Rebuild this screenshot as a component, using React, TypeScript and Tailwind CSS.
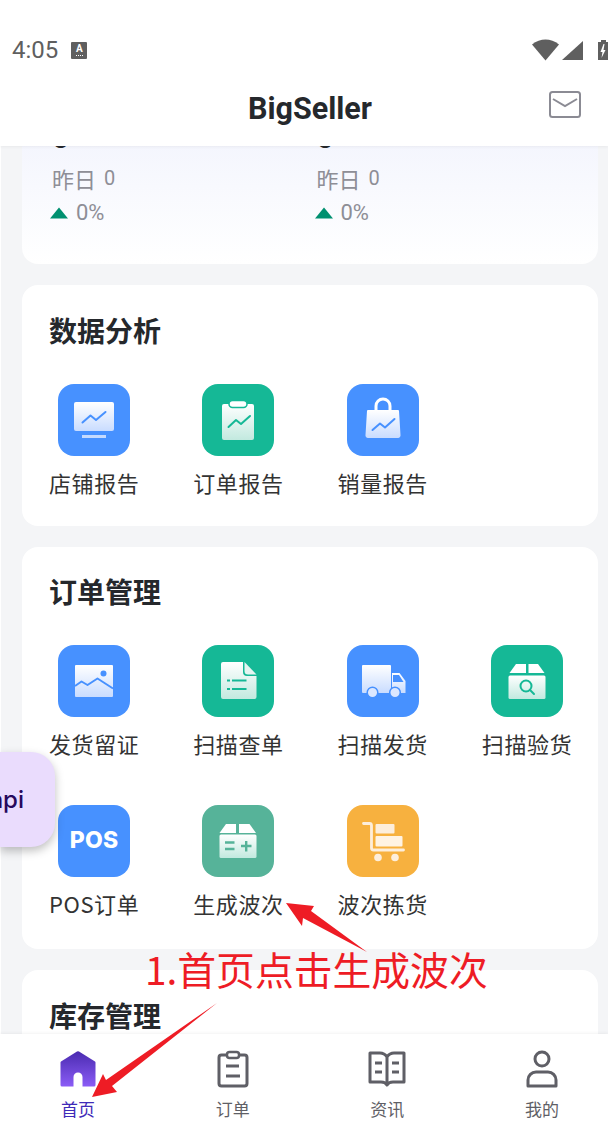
import React from 'react';

const cjk = "font-['Noto_Sans_CJK_SC','Noto_Sans',sans-serif]";
const BLUE = 'bg-[#4791ff]';
const GREEN = 'bg-[#15b896]';

function Grad({ id, to = '#c9dcff' }: { id: string; to?: string }) {
  return (
    <defs>
      <linearGradient id={id} x1="0" y1="0" x2="0" y2="1">
        <stop offset="0" stopColor="#ffffff" />
        <stop offset="1" stopColor={to} />
      </linearGradient>
    </defs>
  );
}

const G = '#c2e9df';
const icons: Record<string, React.ReactNode> = {
  monitor: (
    <svg viewBox="0 0 72 72" className="w-[72px] h-[72px]">
      <Grad id="a1" />
      <rect x="16" y="18" width="40" height="29" rx="2" fill="url(#a1)" />
      <rect x="24" y="51" width="24" height="3" fill="#c5dafe" />
      <path d="M24.500 38.500l8-7 5.500 4.500 9.500-8" fill="none" stroke="#4791ff" strokeWidth="2" strokeLinecap="round" strokeLinejoin="round" />
    </svg>
  ),
  clip: (
    <svg viewBox="0 0 72 72" className="w-[72px] h-[72px]">
      <Grad id="a2" to={G} />
      <rect x="20" y="20" width="32" height="36" rx="2" fill="url(#a2)" />
      <rect x="27" y="16.500" width="18" height="7" rx="3.500" fill="#ffffff" stroke="#15b896" strokeWidth="1.500" />
      <path d="M26.500 43l7.500-7 5 4 9-8" fill="none" stroke="#15b896" strokeWidth="2" strokeLinecap="round" strokeLinejoin="round" />
    </svg>
  ),
  bag: (
    <svg viewBox="0 0 72 72" className="w-[72px] h-[72px]">
      <Grad id="a3" />
      <path d="M29 26v-4a7 7 0 0 1 14 0v4" fill="none" stroke="#ffffff" strokeWidth="3" />
      <path d="M21 26h30a1 1 0 0 1 1 1l1.500 24a2.500 2.500 0 0 1-2.500 3H21a2.500 2.500 0 0 1-2.500-3L20 27a1 1 0 0 1 1-1z" fill="url(#a3)" />
      <path d="M25.500 46l7.500-6.500 5 4 9.500-8.500" fill="none" stroke="#4791ff" strokeWidth="2" strokeLinecap="round" strokeLinejoin="round" />
    </svg>
  ),
  image: (
    <svg viewBox="0 0 72 72" className="w-[72px] h-[72px]">
      <Grad id="a4" />
      <path d="M18 20h36a1 1 0 0 1 1 1v30a1 1 0 0 1-1 1H18a1 1 0 0 1-1-1V21a1 1 0 0 1 1-1z" fill="url(#a4)" />
      <circle cx="45.500" cy="28.500" r="3" fill="#4791ff" />
      <path d="M17 41l6.500-4.500 6 3.500 10-6.500 15.500 10" fill="none" stroke="#4791ff" strokeWidth="2" strokeLinejoin="round" />
    </svg>
  ),
  doc: (
    <svg viewBox="0 0 72 72" className="w-[72px] h-[72px]">
      <Grad id="a5" to={G} />
      <path d="M21 17h20v10a4 4 0 0 0 4 4h9.500v21a2 2 0 0 1-2 2H21a2 2 0 0 1-2-2V19a2 2 0 0 1 2-2z" fill="url(#a5)" />
      <path d="M42.500 17l12 12.500h-8.500a3.500 3.500 0 0 1-3.500-3.500z" fill="#e4f5f1" />
      <path d="M30 35.500h14.500M30 44h14.500" stroke="#15b896" strokeWidth="2.200" fill="none" />
      <path d="M25 35.500h3M25 44h3" stroke="#15b896" strokeWidth="2.200" fill="none" />
    </svg>
  ),
  truck: (
    <svg viewBox="0 0 72 72" className="w-[72px] h-[72px]">
      <Grad id="a6" />
      <path d="M16 20h27a1 1 0 0 1 1 1v27H16a1 1 0 0 1-1-1V21a1 1 0 0 1 1-1z" fill="url(#a6)" />
      <path d="M45 28h7.500l6 8v12H45z" fill="url(#a6)" />
      <path d="M46 30h6l4.500 7H46z" fill="#4791ff" />
      <circle cx="25.500" cy="47.500" r="5.300" fill="#dbe7ff" stroke="#4791ff" strokeWidth="1.500" />
      <circle cx="48" cy="47.500" r="5.300" fill="#dbe7ff" stroke="#4791ff" strokeWidth="1.500" />
    </svg>
  ),
  boxSearch: (
    <svg viewBox="0 0 72 72" className="w-[72px] h-[72px]">
      <Grad id="a7" to={G} />
      <path d="M25 19h10v9H18.500z" fill="#ffffff" />
      <path d="M37.500 19H47l6.500 9h-16z" fill="#ffffff" />
      <rect x="17.500" y="30.500" width="37" height="23.500" rx="1.500" fill="url(#a7)" />
      <circle cx="35" cy="41" r="5.500" fill="none" stroke="#15b896" strokeWidth="2" />
      <path d="M39 45l4 4" stroke="#15b896" strokeWidth="2" strokeLinecap="round" />
    </svg>
  ),
  boxPlus: (
    <svg viewBox="0 0 72 72" className="w-[72px] h-[72px]">
      <Grad id="a8" to={G} />
      <path d="M24 19h10v9H17.500z" fill="#ffffff" />
      <path d="M37 19h10.500l6.500 9H37z" fill="#ffffff" />
      <rect x="17.500" y="29.500" width="37" height="23.500" rx="1.500" fill="url(#a8)" />
      <path d="M23 37.500h9.500M23 44h9.500M39 41h10.500M44.200 36v10.500" stroke="#56b399" strokeWidth="2.400" fill="none" />
    </svg>
  ),
  cart: (
    <svg viewBox="0 0 72 72" className="w-[72px] h-[72px]">
      <path d="M16.500 18.500h6a2 2 0 0 1 2 2V43a2 2 0 0 0 2 2h30" fill="none" stroke="#fdeedb" strokeWidth="2.800" strokeLinecap="round" />
      <rect x="28.500" y="19" width="19" height="9.500" rx="1" fill="#fdeedb" />
      <rect x="28.500" y="31" width="27" height="10.500" rx="1" fill="#fff3e3" />
      <circle cx="31" cy="52.500" r="3.800" fill="#fdeedb" />
      <circle cx="48" cy="52.500" r="3.800" fill="#fdeedb" />
    </svg>
  ),
};

function Item({ bg, icon, label }: { bg: string; icon?: string; label: string }) {
  return (
    <div className="flex flex-col items-center">
      <div className={`w-[72px] h-[72px] rounded-[16px] flex items-center justify-center ${bg}`}>
        {icon ? icons[icon] : <span className="font-['Inter',sans-serif] font-extrabold text-[23px] text-white tracking-[0.2px]">POS</span>}
      </div>
      <div className={`mt-[10px] h-[32px] leading-[32px] text-[22px] text-[#333333] whitespace-nowrap tracking-[0.6px] ${cjk}`}>{label}</div>
    </div>
  );
}

function Card({ title, children, className }: { title: string; children?: React.ReactNode; className: string }) {
  return (
    <section className={`bg-white rounded-[16px] ${className}`}>
      <h2 className={`pl-[27px] h-[38px] leading-[38px] text-[28px] font-bold text-[#25282c] ${cjk}`}>{title}</h2>
      {children && <div className="mt-[35px] grid grid-cols-[repeat(4,144.3px)] gap-y-[46px]">{children}</div>}
    </section>
  );
}

function Stat() {
  return (
    <div className="w-[264.5px]">
      <div className="font-['Roboto',sans-serif] font-bold text-[30px] leading-[36px] text-[#25282c]">0</div>
      <div className="mt-[6px] flex items-start h-[32px]">
        <span className={`text-[22px] leading-[32px] text-[#8e8e96] ${cjk}`}>昨日</span>
        <span className="ml-[8px] mt-[4px] font-['Roboto',sans-serif] text-[20px] leading-[24px] text-[#8e8e96]">0</span>
      </div>
      <div className="mt-[5px] flex items-center h-[28px] -ml-[2px]">
        <svg viewBox="0 0 18 12" className="w-[18px] h-[12px]"><path d="M9 0.500L18 11.500H0z" fill="#009070" /></svg>
        <span className="ml-[8px] font-['Roboto',sans-serif] text-[22px] leading-[28px] text-[#8e8e96]">0%</span>
      </div>
    </div>
  );
}

function NavItem({ label, active, children }: { label: string; active?: boolean; children: React.ReactNode }) {
  return (
    <div className="w-[36px] flex flex-col items-center">
      <div className="h-[42px] w-[44px] flex justify-center items-center shrink-0">{children}</div>
      <div className={`mt-[6px] text-[17px] leading-[26px] whitespace-nowrap ${active ? 'text-[#3f2bb8]' : 'text-[#5f5f66]'} ${cjk}`}>{label}</div>
    </div>
  );
}

export default function App() {
  return (
    <div className="relative w-[608px] h-[1127px] overflow-hidden flex flex-col bg-[#f4f5f7]">
      <header className="relative z-10 bg-white h-[146px] shrink-0 shadow-[0_1px_3px_rgba(0,0,0,0.05)]">
        <div className="h-[80px] pt-[30px] flex items-start">
          <div className="h-[40px] flex items-center pl-[12px]">
            <span className="font-['Roboto',sans-serif] text-[24px] text-[#5f5f5f]">4:05</span>
            <div className="ml-[13px] w-[16px] h-[17px] bg-[#5f5f5f] rounded-[1px] flex flex-col items-center justify-center">
              <span className="font-['Roboto',sans-serif] font-bold text-[10px] leading-[10px] text-white">A</span>
              <span className="w-[7px] h-[1px] mt-[1px] border-t border-dotted border-white" />
            </div>
          </div>
          <div className="ml-auto h-[40px] flex items-center">
            <svg viewBox="0 0 76 22" className="w-[76px] h-[22px]">
              <path d="M0 5.500C4 2 9 0.500 13.500 0.500S23 2 27 5.500L13.500 21.500z" fill="#5f5f5f" />
              <path d="M51 2v19H30z" fill="#5f5f5f" />
              <path d="M66 3h3V1h5v2h2v18H66z" fill="#5f5f5f" />
              <path d="M71.500 5l-3 8h2l-1 6 4-8h-2l1-6z" fill="#ffffff" />
            </svg>
          </div>
        </div>
        <div className="h-[66px] flex items-start">
          <h1 className="ml-[248px] mt-[11px] w-[126px] font-['Roboto',sans-serif] font-bold text-[30.5px] leading-[36px] text-[#25282c] whitespace-nowrap">BigSeller</h1>
          <svg viewBox="0 0 32 27" className="ml-[175px] mt-[11px] w-[32px] h-[27px]" fill="none" stroke="#8b8b94" strokeWidth="2">
            <rect x="1" y="1" width="30" height="25" rx="2.500" />
            <path d="M4 8l12 7 12-7" />
          </svg>
        </div>
      </header>

      <main className="flex-1 min-h-0 overflow-hidden pl-[22px] pr-[10px] -mt-[36px] border-l border-white">
        <section className="-ml-[1px] mb-[21px] rounded-b-[16px] h-[154px] bg-gradient-to-b from-[#f1f3fd] to-white pl-[30px] pt-[10px] flex">
          <Stat />
          <Stat />
        </section>
        <div className="-ml-[1px]">
          <Card title="数据分析" className="pt-[26px] pb-[28px] mb-[20.5px]">
            <Item bg={BLUE} icon="monitor" label="店铺报告" />
            <Item bg={GREEN} icon="clip" label="订单报告" />
            <Item bg={BLUE} icon="bag" label="销量报告" />
          </Card>
          <Card title="订单管理" className="pt-[25px] pb-[30.5px] mb-[21px]">
            <Item bg={BLUE} icon="image" label="发货留证" />
            <Item bg={GREEN} icon="doc" label="扫描查单" />
            <Item bg={BLUE} icon="truck" label="扫描发货" />
            <Item bg={GREEN} icon="boxSearch" label="扫描验货" />
            <Item bg={BLUE} label="POS订单" />
            <Item bg="bg-[#56b399]" icon="boxPlus" label="生成波次" />
            <Item bg="bg-[#f7b13f]" icon="cart" label="波次拣货" />
          </Card>
          <Card title="库存管理" className="pt-[26px] pb-[60px]" />
        </div>
      </main>

      <nav className="relative z-10 h-[93px] shrink-0 bg-white shadow-[0_-1px_3px_rgba(0,0,0,0.05)] flex justify-between items-start pl-[60px] pr-[48px] pt-[14px]">
        <NavItem label="首页" active>
          <svg viewBox="0 0 36 36" className="w-[36px] h-[36px]">
            <defs>
              <linearGradient id="home" x1="0" y1="0" x2="0" y2="1">
                <stop offset="0" stopColor="#4a2bb0" />
                <stop offset="1" stopColor="#8b5cf6" />
              </linearGradient>
            </defs>
            <path d="M17 0.500a2 2 0 0 1 2 0L35 10.500a1.500 1.500 0 0 1 .5 1.200V34a1.500 1.500 0 0 1-1.500 1.500H22.500V26a4.500 4.500 0 0 0-9 0V35.500H2A1.500 1.500 0 0 1 .5 34V11.700A1.500 1.500 0 0 1 1 10.500z" fill="url(#home)" />
          </svg>
        </NavItem>
        <NavItem label="订单">
          <svg viewBox="0 0 32 38" className="w-[32px] h-[38px]" fill="none" stroke="#5f5f66" strokeWidth="3">
            <rect x="2" y="5" width="28" height="31" rx="2.500" />
            <rect x="10" y="2" width="12" height="6" rx="2.500" fill="#ffffff" strokeWidth="2.500" />
            <path d="M9 16h13M9 26h14" />
          </svg>
        </NavItem>
        <NavItem label="资讯">
          <svg viewBox="0 0 38 36" className="w-[38px] h-[36px]" fill="none" stroke="#5f5f66" strokeWidth="3">
            <path d="M19 6c-2-3-4-4-7-4H2v29h11c3 0 5 1 6 3 1-2 3-3 6-3h11V2H26c-3 0-5 1-7 4zM19 6v27" strokeLinejoin="round" />
            <path d="M7 12h7M7 21h7M24 12h7M24 21h7" />
          </svg>
        </NavItem>
        <NavItem label="我的">
          <svg viewBox="0 0 32 38" className="w-[32px] h-[38px]" fill="none" stroke="#5f5f66" strokeWidth="3">
            <circle cx="16" cy="9" r="7" />
            <path d="M2 36v-6a8 8 0 0 1 8-8h12a8 8 0 0 1 8 8v6z" strokeLinejoin="round" />
          </svg>
        </NavItem>
      </nav>

      <div className="absolute z-20 left-0 top-[752px] w-[55px] h-[95px] bg-[#eadcfd] rounded-r-[24px] shadow-[0_4px_10px_rgba(0,0,0,0.25)] flex items-center justify-end pr-[31px] overflow-hidden">
        <span className="font-['Inter',sans-serif] font-medium text-[24px] text-[#26085c] whitespace-nowrap">npi</span>
      </div>

      <div className={`absolute z-30 left-[145px] top-[940px] text-[38.8px] leading-[56px] text-[#ee1c25] whitespace-nowrap ${cjk}`}>1.首页点击生成波次</div>

      <svg viewBox="0 0 608 1127" className="absolute z-30 inset-0 w-[608px] h-[1127px] pointer-events-none">
        <path d="M286 903L314 906L311 911L367 952L303 918L302 926z" fill="#ee1c25" />
        <path d="M217 1003L112 1086L117 1092L92 1097L103 1074L106 1080z" fill="#ee1c25" />
      </svg>
    </div>
  );
}
